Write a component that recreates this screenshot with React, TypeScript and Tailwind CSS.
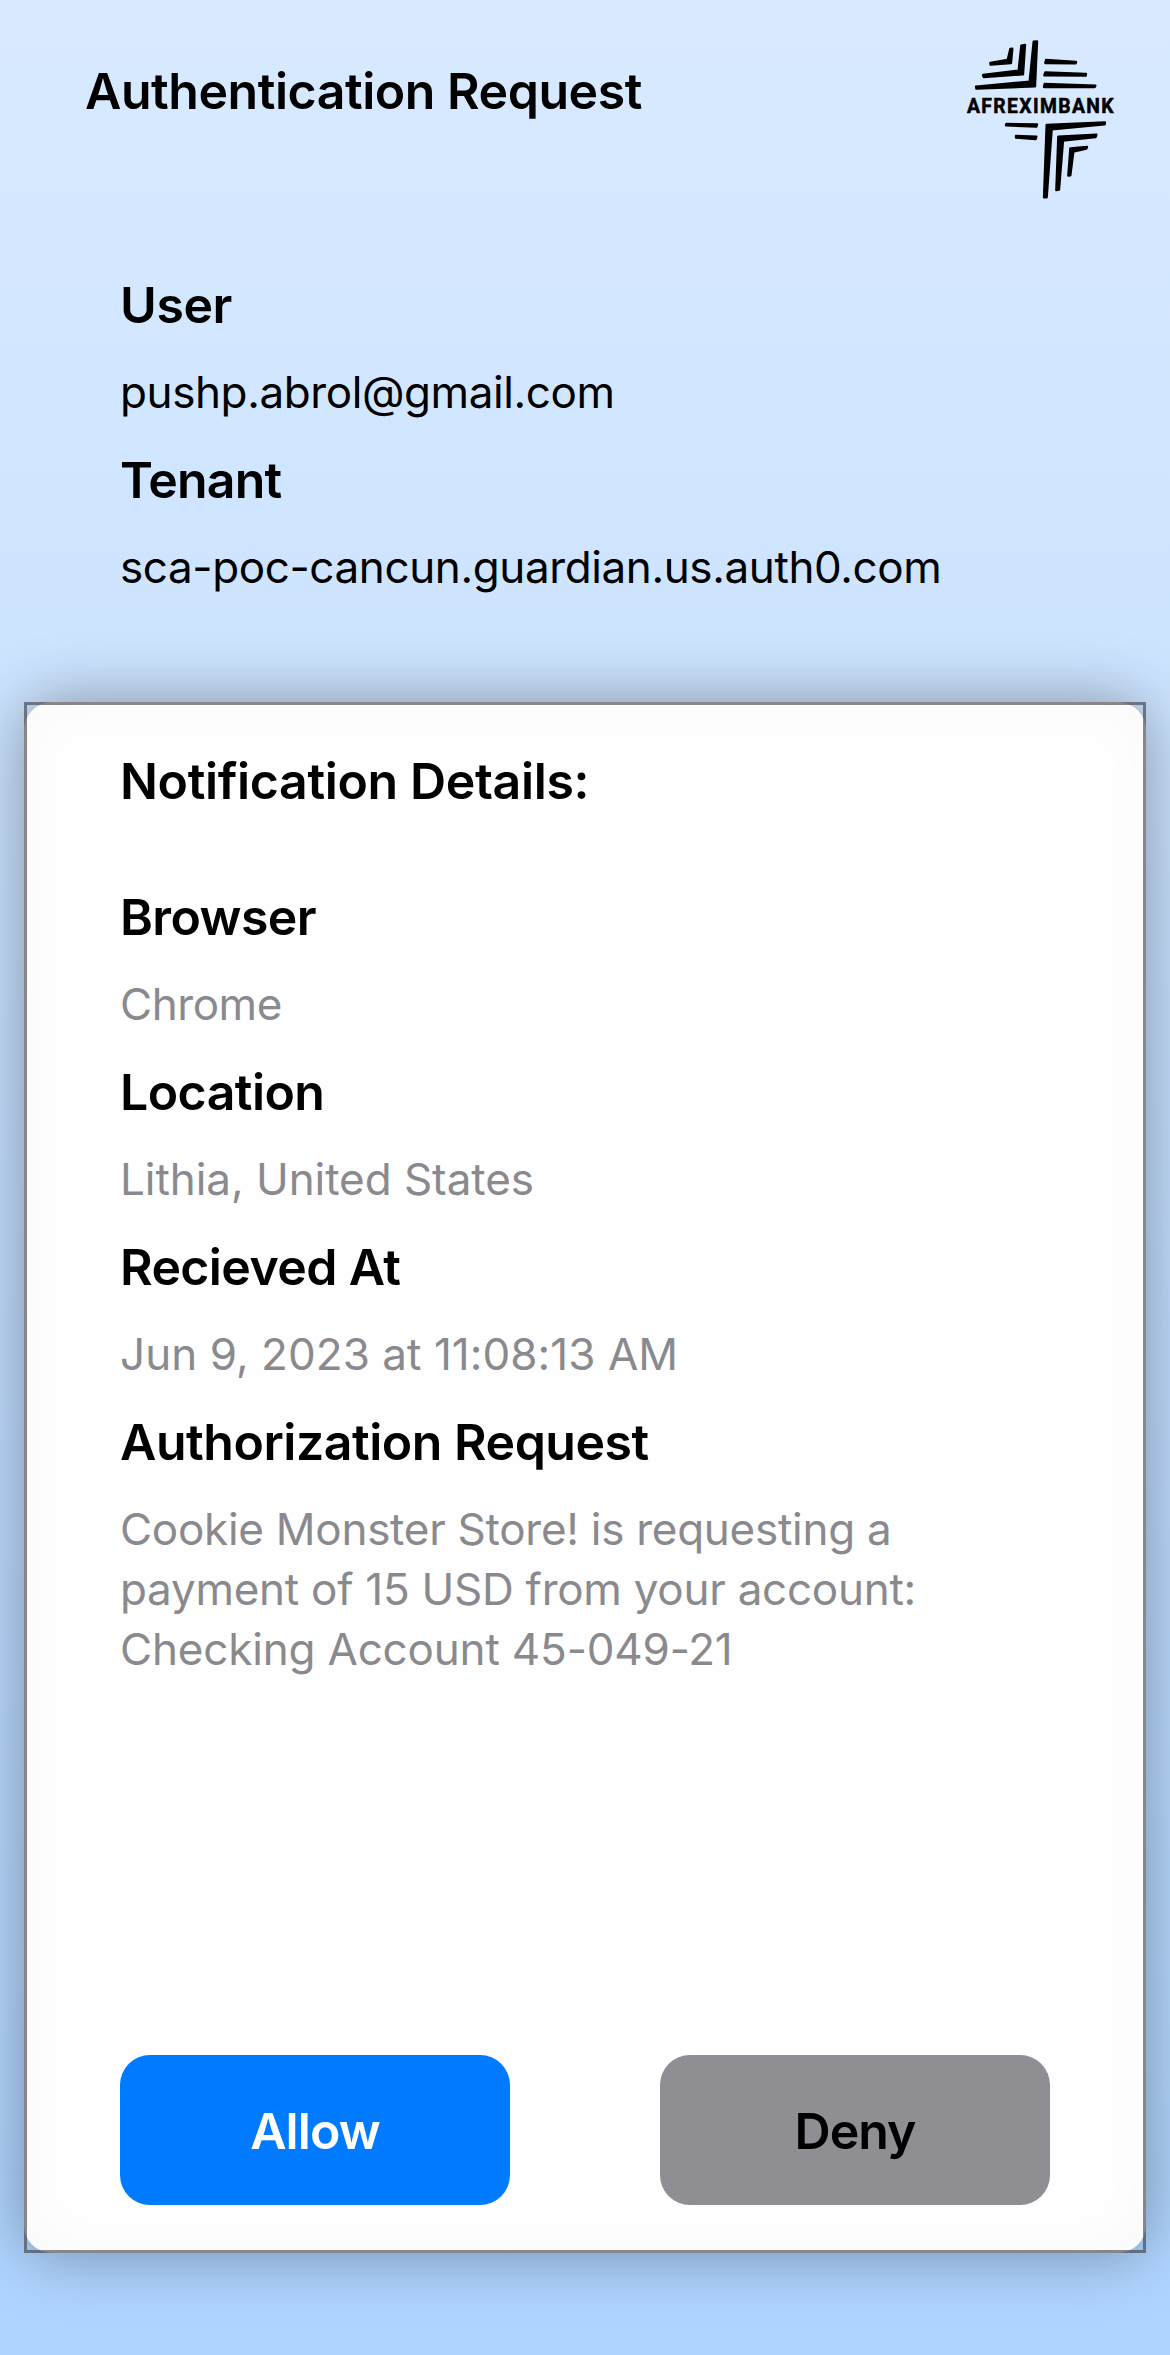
type FieldProps = {
  label: string;
  labelSpacing: string;
  lines: { text: string; spacing: string }[];
  tone?: string;
};

function Field({ label, labelSpacing, lines, tone = "text-black" }: FieldProps) {
  return (
    <div className="flex flex-col gap-[27px]">
      <h2 className={`text-[50px] leading-[60px] font-semibold ${labelSpacing}`}>{label}</h2>
      <div className={`text-[44px] leading-[60px] whitespace-nowrap ${tone}`}>
        {lines.map((line) => (
          <p key={line.text} className={line.spacing}>
            {line.text}
          </p>
        ))}
      </div>
    </div>
  );
}

function Logo() {
  return (
    <svg viewBox="0 0 540 555" className="h-[185px] w-[180px]" fill="#000" aria-label="Afreximbank">
      <g stroke="#000" strokeWidth="7" strokeLinejoin="round">
        <path d="M181 72 L187 71 L183 114 L122 119 L121 114 L173 105 Z" />
        <path d="M214 62 L225 60 L219 148 L101 156 L99 150 L206 137 Z" />
        <path d="M251 50 L261 49 L255 184 L79 191 L78 185 L239 170 Z" />
        <path d="M288 105 L378 111 L377 115 L286 114 Z" />
        <path d="M286 142 L408 147 L407 152 L283 151 Z" />
        <path d="M284 177 L436 182 L434 186 L282 186 Z" />
        <path d="M169 297 L261 298 L259 305 L168 301 Z" />
        <path d="M198 333 L259 335 L257 342 L198 338 Z" />
        <path d="M290 300 L465 292 L464 298 L305 313 L290 517 L282 517 Z" />
        <path d="M325 335 L439 329 L437 336 L339 347 L327 494 L319 495 Z" />
        <path d="M361 370 L411 366 L409 371 L370 380 L361 451 L355 452 Z" />
      </g>
      <text
        x="51"
        y="263"
        textLength="440"
        lengthAdjust="spacing"
        fontFamily="Roboto, sans-serif"
        fontSize="58"
        fontWeight="700"
        stroke="#000"
        strokeWidth="1.5"
      >
        AFREXIMBANK
      </text>
    </svg>
  );
}

export default function App() {
  const muted = "text-[#8a8a8e]";
  return (
    <main className="flex h-[2355px] w-[1170px] flex-col overflow-hidden bg-linear-to-b from-[#d9eaff] to-[#aed4ff] font-['Inter',sans-serif] text-black">
      <header className="flex items-start justify-between pt-[25px] pr-10 pl-[85px]">
        <h1 className="pt-9 text-[50px] leading-[60px] font-semibold tracking-[-0.46px]">
          Authentication Request
        </h1>
        <Logo />
      </header>

      <section className="mt-[65px] flex flex-col gap-7 pl-[120px]">
        <Field
          label="User"
          labelSpacing="tracking-[-0.4px]"
          lines={[{ text: "pushp.abrol@gmail.com", spacing: "tracking-[-0.4px]" }]}
        />
        <Field
          label="Tenant"
          labelSpacing="tracking-[-0.8px]"
          lines={[{ text: "sca-poc-cancun.guardian.us.auth0.com", spacing: "tracking-[-0.39px]" }]}
        />
      </section>

      <section className="relative mx-6 mt-[105px] flex h-[1551px] flex-col rounded-[28px] bg-[#fefefe] px-24 pt-[49px] pb-12 shadow-[0_0_64px_rgba(0,0,0,0.36),inset_0_0_60px_rgba(0,0,0,0.025)]">
        <div className="pointer-events-none absolute inset-0 border-3 border-[rgba(60,57,64,0.6)]" />
        <h2 className="text-[50px] leading-[60px] font-semibold tracking-[-0.35px]">
          Notification Details:
        </h2>
        <div className="mt-[76px] flex flex-col gap-7">
          <Field
            label="Browser"
            labelSpacing="tracking-[-0.6px]"
            tone={muted}
            lines={[{ text: "Chrome", spacing: "tracking-[-0.45px]" }]}
          />
          <Field
            label="Location"
            labelSpacing="tracking-[-0.55px]"
            tone={muted}
            lines={[{ text: "Lithia, United States", spacing: "tracking-[-0.05px]" }]}
          />
          <Field
            label="Recieved At"
            labelSpacing="tracking-[-0.6px]"
            tone={muted}
            lines={[{ text: "Jun 9, 2023 at 11:08:13 AM", spacing: "tracking-[0.05px]" }]}
          />
          <Field
            label="Authorization Request"
            labelSpacing="tracking-[-0.47px]"
            tone={muted}
            lines={[
              { text: "Cookie Monster Store! is requesting a", spacing: "tracking-[-0.27px]" },
              { text: "payment of 15 USD from your account:", spacing: "tracking-[-0.26px]" },
              { text: "Checking Account 45-049-21", spacing: "tracking-[-0.18px]" },
            ]}
          />
        </div>
        <div className="mt-auto flex justify-between text-[50px] leading-[60px] font-semibold">
          <button className="h-[150px] w-[390px] rounded-[30px] bg-[#007aff] pt-0.5 tracking-[-0.9px] text-white">
            Allow
          </button>
          <button className="h-[150px] w-[390px] rounded-[30px] bg-[#8e8e93] pt-0.5 tracking-[-1px]">
            Deny
          </button>
        </div>
      </section>
    </main>
  );
}
